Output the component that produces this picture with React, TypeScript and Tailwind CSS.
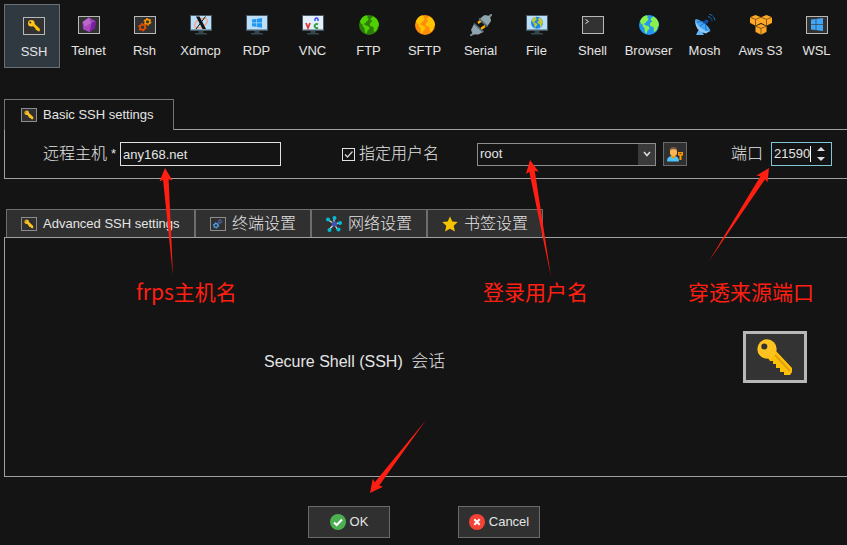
import React from "react";
import type { ReactNode } from "react";

const latin = "font-['Liberation_Sans','Noto_Sans_CJK_SC',sans-serif]";
const cjk = "font-['Noto_Sans_CJK_SC',sans-serif]";
const cjkLabel = "pb-1 text-base font-light leading-4 whitespace-nowrap";

/* ---------- icons ---------- */

function KeyShape() {
  return (
    <g>
      <path d="M25 27l8-7 16 17v4l-2 3h-6v-3h-4v-4h-4v-4h-3v-3h-3z" fill="#ffc107" />
      <path d="M32 24l15 16" stroke="#e0a010" strokeWidth="2" />
      <circle cx="24" cy="18" r="9.700" fill="#ffc31f" />
      <circle cx="21.300" cy="15.500" r="3" fill="#333" />
    </g>
  );
}

function SmallKey() {
  return (
    <g>
      <circle cx="8.300" cy="6.300" r="3.300" fill="#ffc31f" />
      <path d="M9.500 8.800l2-2 5.300 5v2.400h-2l-1-1.300h-1.200v-1.300z" fill="#ffc107" />
      <circle cx="7.300" cy="5.400" r="1" fill="#333" />
    </g>
  );
}

function Framed({ children }: { children: ReactNode }) {
  return (
    <svg width="22" height="20" viewBox="0 0 22 20">
      <rect x="0.5" y="1.5" width="21" height="17" fill="#323232" stroke="#b8b8b8" />
      <g transform="translate(0 1)">{children}</g>
    </svg>
  );
}

function TabFrame({ children }: { children: ReactNode }) {
  return (
    <svg width="16" height="14" viewBox="0 0 16 14">
      <rect x="0.5" y="0.5" width="15" height="13" fill="#303030" stroke="#8c8c8c" />
      {children}
    </svg>
  );
}

function TabKey() {
  return (
    <TabFrame>
      <circle cx="5.700" cy="4.700" r="2.300" fill="#ffc31f" />
      <path d="M6 6.500l1.800-1.700 4.400 4.200v2.200h-1.700l-1-1.200h-1z" fill="#ffc31f" />
      <circle cx="5" cy="4" r="0.600" fill="#333" />
    </TabFrame>
  );
}

function Gear({ x, y, r, color }: { x: number; y: number; r: number; color: string }) {
  const tooth = (2 * Math.PI * r * 1.45) / 12;
  return (
    <g transform={`translate(${x} ${y})`}>
      <circle r={r} fill="none" stroke={color} strokeWidth={r * 0.6} />
      <circle
        r={r * 1.45}
        fill="none"
        stroke={color}
        strokeWidth={r * 0.5}
        strokeDasharray={`${tooth} ${tooth}`}
      />
    </g>
  );
}

function Monitor({ children, screen = "#bbdefb" }: { children: ReactNode; screen?: string }) {
  return (
    <svg width="22" height="20" viewBox="0 0 22 20">
      <path d="M8.500 16h5v2h3.500v1.500H5V18h3.500z" fill="#37474f" />
      <rect x="0" y="0" width="22" height="16" fill="#455a64" />
      <rect x="1" y="1" width="20" height="13.500" fill={screen} />
      {children}
    </svg>
  );
}

function Windows() {
  return (
    <path
      fill="#2196f3"
      d="M6 4.600l4-.6v3.600H6zM10.600 3.900L16 3.100v4.500h-5.400zM6 8.200h4v3.600l-4-.6zM10.600 8.200H16v4.500l-5.400-.8z"
    />
  );
}

function WindowsLarge() {
  return (
    <g>
      <path fill="#42a5f5" d="M5 3.500L17 2v13L5 13.500z" />
      <path d="M10 2v13M5 8.500h12" stroke="#323232" strokeWidth="0.600" />
    </g>
  );
}

function GlobeShape({ sea, land }: { sea: string; land: string }) {
  return (
    <g>
      <circle cx="10" cy="10" r="10" fill={sea} />
      <path
        fill={land}
        d="M2 4.200C3.500 2 5.300.9 7.600.3L9 1.400 8 2.800l1.500.6-.4 2-1.600.8-.7 1.700-1.800.5.5 1.400 1.800.6 2 .8 1.300 1.400-.8 2-1.300 1-.8 2.600-1 .2-1-2.700-.2-2.600-1.500-1.700-.4-1.900L2 8.500 1 6.500zM11.500 4.500l1.200-2 2-.9 3 2.500 1.900 3.500.3 2.600-1.400 2-.7 2.600-2 2.200-1.200-1.200.3-2.800-1.400-1.400-2-.4-.8-1.800.9-2 1.700-.8-.8-1z"
      />
    </g>
  );
}

function Globe({ sea, land }: { sea: string; land: string }) {
  return (
    <svg width="20" height="20" viewBox="0 0 20 20">
      <GlobeShape sea={sea} land={land} />
    </svg>
  );
}

function GemIcon() {
  return (
    <Framed>
      <path d="M11 1.500L17.500 5l-.5 7-5.500 4L5 13 4.500 6z" fill="#9c3fc0" />
      <path d="M11 1.500L13.500 7 7 11 4.500 6z" fill="#ba68c8" />
      <path d="M13.500 7l4-2-.5 7-5.500 4z" fill="#7b1fa2" />
      <path d="M7 11l6.500-4-2 9L5 13z" fill="#ab47bc" />
    </Framed>
  );
}

function SerialIcon() {
  return (
    <svg width="22" height="22" viewBox="0 0 22 22">
      <path d="M8 9l4-3M11 15l4-3" stroke="#ffb300" strokeWidth="2.200" />
      <path d="M19 3l3-3" stroke="#78909c" strokeWidth="2" />
      <path d="M0 22l4-3" stroke="#78909c" strokeWidth="2" />
      <path d="M10 4.500l4.500-3.500L20 2l1 5-3.500 5z" fill="#90a4ae" />
      <path d="M9.500 4l8.500 8-1 1.200-8.800-8.200z" fill="#546e7a" />
      <path d="M4 10l9 8-4.500 2.500L3 20.500 1 16z" fill="#90a4ae" />
      <path d="M4.500 9l9.500 8.500-1.200 1.200L3.500 10z" fill="#546e7a" />
    </svg>
  );
}

function DishIcon() {
  return (
    <svg width="22" height="22" viewBox="0 0 22 22">
      <path d="M5 15l-3 6h8l-3-5z" fill="#64b5f6" />
      <path d="M1.500 5.500C0 11 4 18.500 12 19.500l4-2.500z" fill="#90caf9" />
      <path d="M1.500 5C5 5 15 11 16.500 17 13 19 1 12 1.500 5z" fill="#42a5f5" />
      <path d="M3 8l8.500-.3L12 17M6 12l6-4" stroke="#1565c0" strokeWidth="0.800" fill="none" />
      <circle cx="12.500" cy="7.500" r="2" fill="#0d47a1" />
      <path
        d="M14 2.500a5 5 0 0 1 4 4.500M15 0a8 8 0 0 1 6 7"
        stroke="#1976d2"
        strokeWidth="1"
        strokeDasharray="4 1"
        fill="none"
      />
    </svg>
  );
}

function Cube({ x, y }: { x: number; y: number }) {
  return (
    <g transform={`translate(${x} ${y})`}>
      <path d="M5.500 0L11 2.200v6L5.500 11 0 8.200v-6z" fill="#ffa726" />
      <path d="M0 2.200l5.500 2.200L11 2.200M5.500 4.400V11" stroke="#6d4310" strokeWidth="0.800" fill="none" />
      <path d="M0 8.200L5.500 11 11 8.200" stroke="#141414" strokeWidth="0.600" fill="none" />
    </g>
  );
}

function UserKeyIcon() {
  return (
    <svg width="17" height="15" viewBox="0 0 17 15">
      <path d="M0 14.500c0-4 2-5 4.500-5.500h3c3 .5 4.500 2 4.500 5.500z" fill="#4fc3f7" />
      <path d="M4.500 8h3.500v2.500l-2 1-1.500-1z" fill="#ff9800" />
      <rect x="3" y="1" width="7" height="8" rx="3" fill="#ffb74d" />
      <path d="M2.500 4C2.500 1 4 0 6.500 0S10.500 1 10.200 3.500L8 2.200H4.500z" fill="#795548" />
      <path d="M11 5h5v3.500h-1.500V13h-2V8.500H11z" fill="#ff9800" />
      <rect x="12.500" y="6" width="2" height="1" fill="#5d4037" />
    </svg>
  );
}

const protocols: { name: string; icon: ReactNode }[] = [
  { name: "SSH", icon: <Framed><SmallKey /></Framed> },
  { name: "Telnet", icon: <GemIcon /> },
  {
    name: "Rsh",
    icon: (
      <Framed>
        <Gear x={13.5} y={5.8} r={2.3} color="#ff9800" />
        <Gear x={8.5} y={11.2} r={2.5} color="#e65100" />
      </Framed>
    ),
  },
  {
    name: "Xdmcp",
    icon: (
      <Monitor>
        <ellipse cx="11" cy="8" rx="7" ry="4" fill="none" stroke="#ff9b70" strokeWidth="1.200" transform="rotate(-30 11 8)" />
        <path d="M6 1.500h3.500L16 14h-3.500z" fill="#111" />
        <path d="M15.500 1.500L6 14" stroke="#111" strokeWidth="1" />
      </Monitor>
    ),
  },
  { name: "RDP", icon: <Monitor><Windows /></Monitor> },
  {
    name: "VNC",
    icon: (
      <Monitor screen="#e1f0fb">
        <path d="M4 8l2 5 2-5" fill="none" stroke="#e53935" strokeWidth="1.800" />
        <path d="M13 6V4.500a1.500 1.500 0 0 1 3 0V6" fill="none" stroke="#3949ff" strokeWidth="1.500" />
        <path d="M16 9.500a2 2 0 1 0 0 3" fill="none" stroke="#2e9d32" strokeWidth="1.700" />
      </Monitor>
    ),
  },
  { name: "FTP", icon: <Globe sea="#2e7d0a" land="#4fd000" /> },
  { name: "SFTP", icon: <Globe sea="#ff8c0a" land="#ffc400" /> },
  { name: "Serial", icon: <SerialIcon /> },
  {
    name: "File",
    icon: (
      <Monitor>
        <g transform="translate(5 1.700) scale(0.6)"><GlobeShape sea="#1e88e5" land="#c0ca33" /></g>
      </Monitor>
    ),
  },
  {
    name: "Shell",
    icon: <Framed><path d="M3.500 3.500l3 2-3 2" fill="none" stroke="#e0e0e0" strokeWidth="1" /></Framed>,
  },
  { name: "Browser", icon: <Globe sea="#2196f3" land="#8cf04a" /> },
  { name: "Mosh", icon: <DishIcon /> },
  {
    name: "Aws S3",
    icon: (
      <svg width="22" height="20" viewBox="0 0 22 20">
        <Cube x={0} y={0} />
        <Cube x={11} y={0} />
        <Cube x={5.5} y={9} />
      </svg>
    ),
  },
  { name: "WSL", icon: <Framed><WindowsLarge /></Framed> },
];

/* ---------- annotations ---------- */

function Arrow({ x, y, toX, toY }: { x: number; y: number; toX: number; toY: number }) {
  const length = Math.hypot(toX - x, toY - y);
  const angle = (Math.atan2(toY - y, toX - x) * 180) / Math.PI - 90;
  return (
    <path
      transform={`translate(${x} ${y}) rotate(${angle})`}
      d={`M0 0L-6.500 13L-2.800 11.500L0 ${length}L2.800 11.500L6.500 13Z`}
      fill="#ff1f12"
    />
  );
}

function Note({ place, children }: { place: string; children: ReactNode }) {
  return (
    <span className={`pointer-events-none absolute whitespace-nowrap text-[21px] leading-7 text-[#ff1f12] ${cjk} ${place}`}>
      {children}
    </span>
  );
}

/* ---------- page ---------- */

function Tab({ icon, children, className }: { icon: ReactNode; children: ReactNode; className: string }) {
  return (
    <button type="button" className={`flex h-7 items-center border border-b-0 border-[#6e6e6e] bg-[#303030] pl-3.5 ${className}`}>
      {icon}
      <span className="ml-1.5 whitespace-nowrap">{children}</span>
    </button>
  );
}

function Cjk({ children }: { children: ReactNode }) {
  return <span className={`block ${cjkLabel} ${cjk}`}>{children}</span>;
}

export default function App() {
  return (
    <div className={`relative min-h-screen overflow-hidden bg-[#141414] pl-1 text-[13px] leading-4 text-[#e4e4e4] ${latin}`}>
      <nav className="flex pt-1">
        {protocols.map((p, i) => (
          <button
            key={p.name}
            type="button"
            className={`flex h-16 w-14 shrink-0 flex-col items-center border ${
              i === 0 ? "border-[#6b6f73] bg-[#303840] pl-1 pt-[11px]" : "border-transparent pl-px pt-2.5"
            }`}
          >
            <span className="flex h-5 items-center justify-center">{p.icon}</span>
            <span className="mt-2 whitespace-nowrap">{p.name}</span>
          </button>
        ))}
      </nav>

      <section className="mt-[31px]">
        <div className="flex">
          <button type="button" className="flex h-[31px] w-[170px] items-center border border-b-0 border-[#757575] pl-4">
            <TabKey />
            <span className="ml-1.5">Basic SSH settings</span>
          </button>
          <div className="flex-1 border-b border-[#a0a0a0]" />
        </div>
        <div className="flex h-[49px] items-center border-b border-l border-[#a0a0a0] pl-[38px]">
          <label htmlFor="host" className="flex w-[77px] items-center gap-1">
            <Cjk>远程主机</Cjk>
            <span>*</span>
          </label>
          <input id="host" defaultValue="any168.net" className="h-6 w-[161px] border border-[#e0e0e0] bg-[#141414] px-0.5 outline-none" />
          <label className="ml-[61px] flex items-center gap-1">
            <input
              type="checkbox"
              defaultChecked
              className="peer h-[13px] w-[13px] appearance-none border border-[#e0e0e0] bg-[#141414]"
            />
            <svg width="13" height="13" viewBox="0 0 13 13" className="pointer-events-none -ml-[17px] hidden peer-checked:block">
              <path d="M3 6.500l2.500 2.500L10.500 3.500" fill="none" stroke="#d0d0d0" strokeWidth="1.300" />
            </svg>
            <Cjk>指定用户名</Cjk>
          </label>
          <div className="relative ml-[38px]">
            <select aria-label="用户名" className="block h-[23px] w-[179px] appearance-none border border-[#8c8c8c] bg-[#141414] px-0.5 outline-none">
              <option>root</option>
            </select>
            <span className="pointer-events-none absolute inset-y-px right-px flex w-[17px] items-center justify-center bg-[#3a3a3a]">
              <svg width="8" height="6" viewBox="0 0 8 6"><path d="M1 1l3 3.500L7 1" fill="none" stroke="#ddd" strokeWidth="1.500" /></svg>
            </span>
          </div>
          <button type="button" aria-label="用户" className="ml-[7px] flex h-6 w-6 items-center justify-center border border-[#6a6a6a] bg-[#303030]">
            <UserKeyIcon />
          </button>
          <label htmlFor="port" className="ml-11 w-10"><Cjk>端口</Cjk></label>
          <div className="flex h-6 w-[61px] items-center border border-[#80c8d8] pl-0.5">
            <input id="port" defaultValue="21590" className="w-9 bg-transparent outline-none" />
            <span className="h-4 w-px bg-white" />
            <span className="ml-1.5 flex flex-col gap-1.5">
              <button type="button" aria-label="+" className="h-1 w-2">
                <svg className="block" width="8" height="4" viewBox="0 0 8 4"><path d="M0 4l4-4 4 4z" fill="#ddd" /></svg>
              </button>
              <button type="button" aria-label="-" className="h-1 w-2">
                <svg className="block" width="8" height="4" viewBox="0 0 8 4"><path d="M0 0l4 4 4-4z" fill="#ddd" /></svg>
              </button>
            </span>
          </div>
        </div>
      </section>

      <section className="mt-[30px]">
        <div className="flex pl-0.5">
          <Tab className="w-[189px]" icon={<TabKey />}>Advanced SSH settings</Tab>
          <Tab
            className="w-[116px]"
            icon={
              <TabFrame>
                <Gear x={10} y={4.5} r={1.4} color="#5c6bc0" />
                <Gear x={6} y={8.5} r={1.9} color="#4fa8f5" />
              </TabFrame>
            }
          >
            <Cjk>终端设置</Cjk>
          </Tab>
          <Tab
            className="w-[116px]"
            icon={
              <svg width="16" height="16" viewBox="0 0 16 16">
                <path d="M8 8L2 3.500M8 8V2M8 8l6-1M8 8l4 6M8 8l-5 6" stroke="#cfd8dc" strokeWidth="1.300" />
                <g fill="#00bcd4">
                  <circle cx="2" cy="3.500" r="2" />
                  <circle cx="8.500" cy="2" r="2" />
                  <circle cx="14" cy="7" r="2" />
                  <circle cx="12.500" cy="13.500" r="2" />
                  <circle cx="3.500" cy="14" r="2" />
                </g>
                <circle cx="8.500" cy="8" r="2.700" fill="#3f51b5" />
              </svg>
            }
          >
            <Cjk>网络设置</Cjk>
          </Tab>
          <Tab
            className="w-[116px]"
            icon={
              <svg width="16" height="16" viewBox="0 0 16 16">
                <path d="M8 .5l2.300 5 5.500.6-4.100 3.700 1.200 5.600L8 12.700l-4.900 2.700 1.200-5.600L.2 6.100l5.500-.6z" fill="#f5c400" />
              </svg>
            }
          >
            <Cjk>书签设置</Cjk>
          </Tab>
        </div>
        <div className="flex h-60 items-center border-y border-l border-[#a0a0a0] pl-[259px] pr-10">
          <h1 className="mt-1.5 flex-1 text-base">
            Secure Shell (SSH) <span className={`ml-1 text-[17px] font-light ${cjk}`}>会话</span>
          </h1>
          <svg width="64" height="52" viewBox="0 0 64 52" className="shrink-0">
            <rect x="1.500" y="1.500" width="61" height="49" fill="#333" stroke="#b8b8b8" strokeWidth="3" />
            <KeyShape />
          </svg>
        </div>
      </section>

      <div className="flex gap-[68px] pl-[304px] pt-[29px]">
        <button type="button" className="flex h-8 w-[82px] items-center justify-center gap-1 border border-[#6a6a6a] bg-[#303030]">
          <svg width="16" height="16" viewBox="0 0 16 16">
            <circle cx="8" cy="8" r="8" fill="#4caf50" />
            <path d="M4 8.500l2.700 2.500L12 5.500" fill="none" stroke="#fff" strokeWidth="2" />
          </svg>
          OK
        </button>
        <button type="button" className="flex h-8 w-[82px] items-center justify-center gap-1 border border-[#6a6a6a] bg-[#303030]">
          <svg width="16" height="16" viewBox="0 0 16 16">
            <circle cx="8" cy="8" r="8" fill="#f44336" />
            <path d="M5.300 5.300l5.400 5.400M10.700 5.300l-5.400 5.400" stroke="#fff" strokeWidth="2" />
          </svg>
          Cancel
        </button>
      </div>

      <svg className="pointer-events-none absolute left-0 top-0" width="847" height="545" viewBox="0 0 847 545">
        <Arrow x={165} y={168} toX={173} toY={276} />
        <Arrow x={530} y={160} toX={551} toY={277} />
        <Arrow x={769} y={168} toX={709} toY={261} />
        <Arrow x={370} y={493} toX={426} toY={420} />
      </svg>
      <Note place="left-[136px] top-[277px]">frps主机名</Note>
      <Note place="left-[483px] top-[277px]">登录用户名</Note>
      <Note place="left-[688px] top-[277px]">穿透来源端口</Note>
    </div>
  );
}
